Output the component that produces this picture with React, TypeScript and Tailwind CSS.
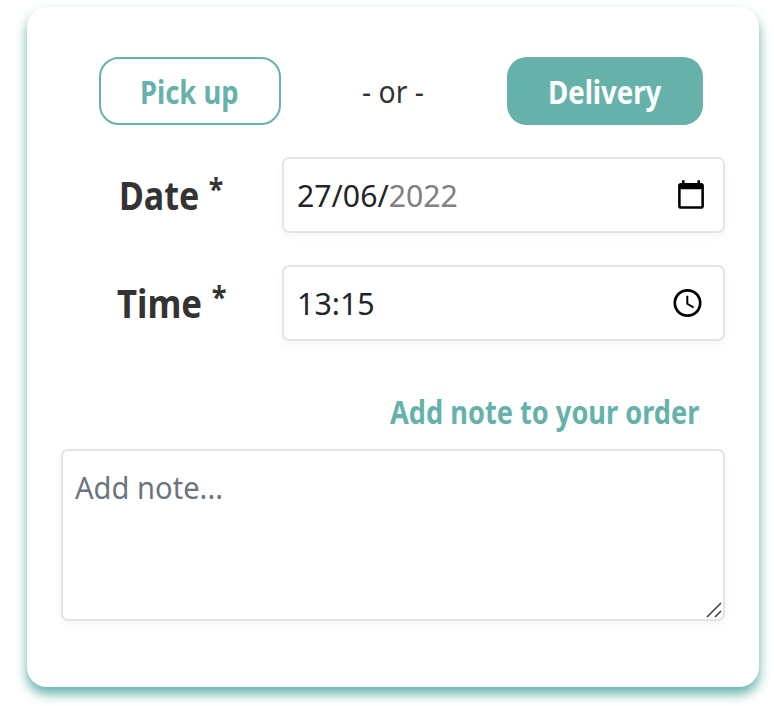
import type { ReactNode } from "react";

function Text({ box, fit, children }: { box: string; fit: string; children: ReactNode }) {
  return (
    <span className={`block whitespace-nowrap ${box}`}>
      <span className={`inline-block origin-left ${fit}`}>{children}</span>
    </span>
  );
}

function Required() {
  return <span className="ml-[11px] inline-block -translate-y-[10px] text-[31px] leading-none">*</span>;
}

const field =
  "h-[76px] rounded-[7px] border-2 border-[#e4e4e4] bg-white shadow-[0_4px_8px_rgba(0,0,0,0.04)]";

export default function App() {
  return (
    <div className="h-[706px] w-[774px] overflow-hidden bg-white pl-[27px] pt-[7px] font-['Noto_Sans',sans-serif] text-[31.5px] leading-[44px] text-[#333]">
      <div className="flex h-[680px] w-[732px] flex-col rounded-[20px] bg-white pl-[34px] pr-[34px] pt-[50px] shadow-[0_7px_12px_#66b2aa]">
        <div className="flex h-[68px] items-center pl-[38px] font-bold text-[#66b2aa]">
          <button className="flex h-[68px] w-[182px] items-center rounded-[20px] border-2 border-[#66b2aa] pl-[39px] pt-[1px]">
            <Text box="w-[100px]" fit="scale-x-[0.87]">Pick up</Text>
          </button>
          <div className="ml-[81px] font-normal text-[#333]">
            <Text box="w-[64px]" fit="scale-x-[0.9]">- or -</Text>
          </div>
          <button className="ml-[81px] flex h-[68px] w-[196px] shrink-0 items-center rounded-[20px] bg-[#66b2aa] pl-[41px] pt-[1px] text-white">
            <Text box="w-[114px]" fit="scale-x-[0.875]">Delivery</Text>
          </button>
        </div>

        <div className="mt-[32px] flex items-center">
          <label className="w-[221px] pl-[58px] text-[39.5px] font-bold">
            <Text box="w-[110px]" fit="scale-x-[0.86]">Date<Required /></Text>
          </label>
          <div className={`flex w-[443px] shrink-0 items-center justify-between pl-[13px] pr-[16px] text-[#212529] ${field}`}>
            <Text box="w-[170px]" fit="scale-x-[0.96]">
              27/06/<span className="text-[#808080]">2022</span>
            </Text>
            <svg className="mb-[2px]" width="32" height="31" viewBox="0 0 24 24" fill="#000">
              <path d="M20 3h-1V1h-2v2H7V1H5v2H4c-1.1 0-2 .9-2 2v16c0 1.1.9 2 2 2h16c1.1 0 2-.9 2-2V5c0-1.1-.9-2-2-2zm0 18H4V8h16v13z" />
            </svg>
          </div>
        </div>

        <div className="mt-[32px] flex items-center">
          <label className="w-[221px] pl-[56px] text-[39.5px] font-bold">
            <Text box="w-[110px]" fit="scale-x-[0.88]">Time<Required /></Text>
          </label>
          <div className={`flex w-[443px] shrink-0 items-center justify-between pl-[13px] pr-[19px] text-[#212529] ${field}`}>
            <Text box="w-[170px]" fit="scale-x-[0.965]">13:15</Text>
            <svg className="mb-[1px]" width="32" height="32" viewBox="0 0 32 32" fill="none" stroke="#000">
              <circle cx="15.5" cy="16" r="12.7" strokeWidth="2.7" />
              <path d="M15.3 8.8v8l6.3 3.7" strokeWidth="2" />
            </svg>
          </div>
        </div>

        <div className="mt-[49px] flex h-[44px] pl-[329px] font-bold text-[#66b2aa]">
          <Text box="w-[310px]" fit="scale-x-[0.863]">Add note to your order</Text>
        </div>

        <div className="mt-[15px] flex h-[172px] w-[664px] items-start justify-between rounded-[7px] border-2 border-[#e4e4e4] bg-white pl-[12px] pt-[14px] text-[#6c757d] shadow-[0_4px_8px_rgba(0,0,0,0.04)]">
          <Text box="w-[160px]" fit="scale-x-[0.925]">Add note...</Text>
          <svg className="mb-[1px] mr-[1px] self-end" width="16" height="16" viewBox="0 0 16 16" stroke="#444" strokeWidth="1.6">
            <path d="M1 15 15 1M9 15l6-6" />
          </svg>
        </div>
      </div>
    </div>
  );
}
